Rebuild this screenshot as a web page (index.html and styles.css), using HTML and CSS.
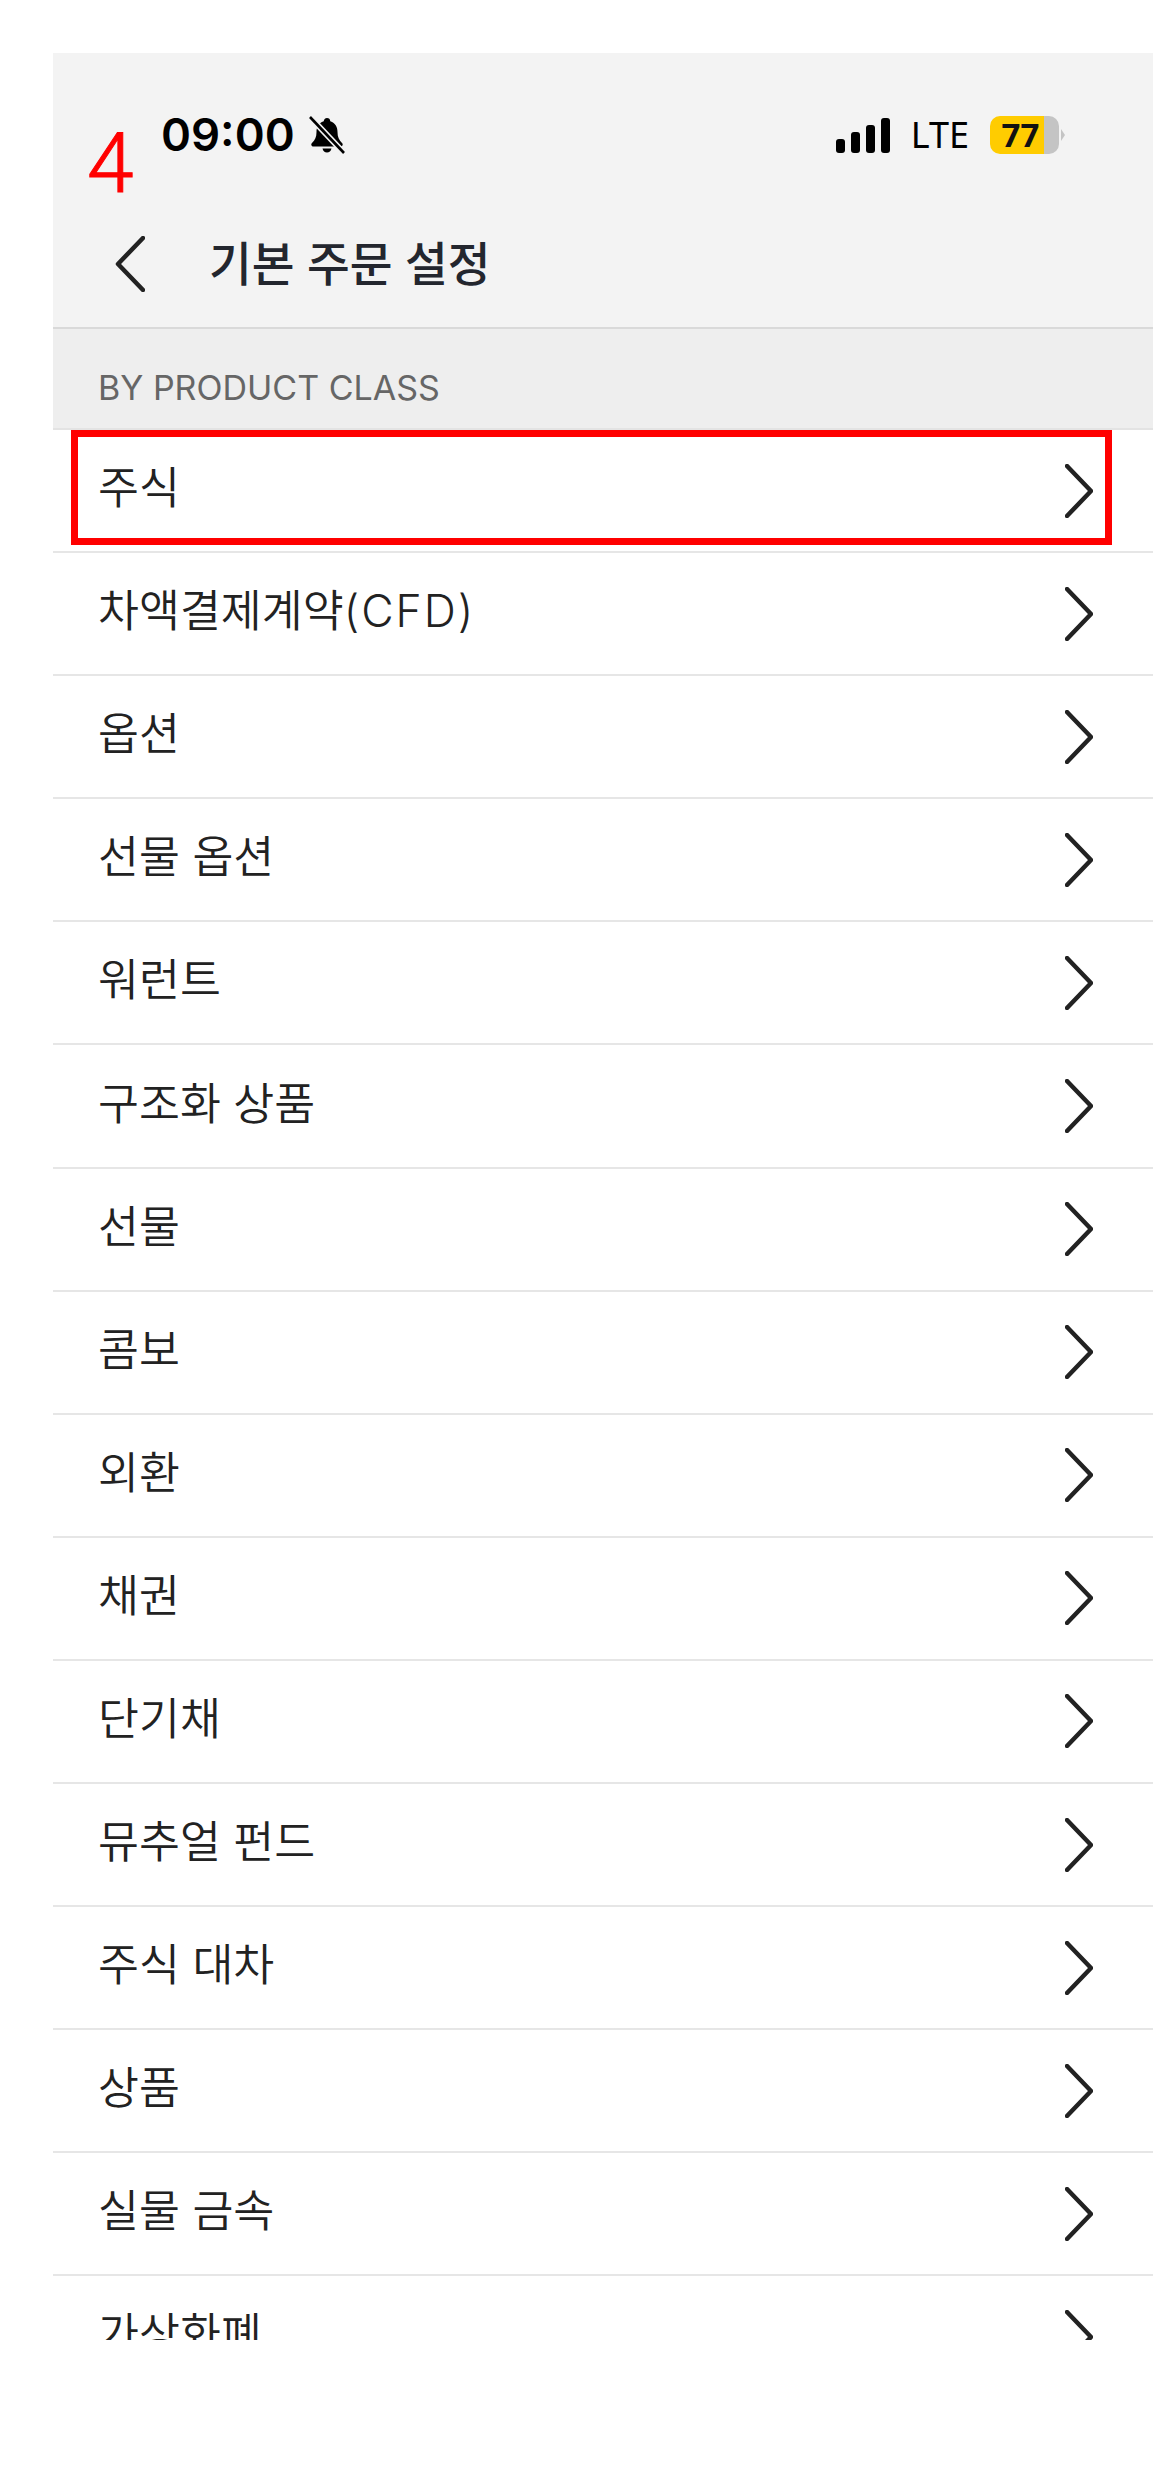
FILE: index.html
```html
<!DOCTYPE html>
<html lang="ko">

<head>
  <meta charset="UTF-8">
  <meta name="viewport" content="width=device-width, initial-scale=1.0">
  <title>기본 주문 설정</title>
  <link rel="stylesheet" href="styles.css">
</head>

<body>
  <main class="phone">
    <header class="top">
      <div class="status">
        <div class="status-left">
          <span class="time">09:00</span>
          <svg class="bell" viewBox="0 0 36 40">
            <path d="M18 3c-2 0-3 1.500-3.300 3.200C9.500 8 7.500 12 7.500 17c0 5-1.500 8-4.500 11-1.500 1.500-.5 3.500 1.500 3.500h27c2 0 3-2 1.500-3.500-3-3-4.500-6-4.500-11 0-5-2-9-7.200-10.800C21 4 20 3 18 3zM13.500 33.500c.5 2.500 2.300 4 4.500 4s4-1.500 4.500-4z" fill="#000" />
            <path d="M1 2l34 36" stroke="#f2f2f2" stroke-width="6" />
            <path d="M1 2l34 36" stroke="#000" stroke-width="2.600" />
          </svg>
        </div>
        <div class="status-right">
          <span class="signal"><i></i><i></i><i></i><i></i></span>
          <span class="lte">LTE</span>
          <span class="battery">77</span>
        </div>
      </div>
      <div class="nav">
        <svg class="back" viewBox="0 0 30 56">
          <path d="M28 2L3 28l25 26" />
        </svg>
        <h1>기본 주문 설정</h1>
      </div>
    </header>

    <div class="section-title">BY PRODUCT CLASS</div>

    <ul class="list">
      <li>주식<svg class="arrow" viewBox="0 0 28 54"><path d="M2 2l24 25L2 52" /></svg></li>
      <li><span>차액결제계약<span class="latin">(CFD)</span></span><svg class="arrow" viewBox="0 0 28 54"><path d="M2 2l24 25L2 52" /></svg></li>
      <li>옵션<svg class="arrow" viewBox="0 0 28 54"><path d="M2 2l24 25L2 52" /></svg></li>
      <li>선물 옵션<svg class="arrow" viewBox="0 0 28 54"><path d="M2 2l24 25L2 52" /></svg></li>
      <li>워런트<svg class="arrow" viewBox="0 0 28 54"><path d="M2 2l24 25L2 52" /></svg></li>
      <li>구조화 상품<svg class="arrow" viewBox="0 0 28 54"><path d="M2 2l24 25L2 52" /></svg></li>
      <li>선물<svg class="arrow" viewBox="0 0 28 54"><path d="M2 2l24 25L2 52" /></svg></li>
      <li>콤보<svg class="arrow" viewBox="0 0 28 54"><path d="M2 2l24 25L2 52" /></svg></li>
      <li>외환<svg class="arrow" viewBox="0 0 28 54"><path d="M2 2l24 25L2 52" /></svg></li>
      <li>채권<svg class="arrow" viewBox="0 0 28 54"><path d="M2 2l24 25L2 52" /></svg></li>
      <li>단기채<svg class="arrow" viewBox="0 0 28 54"><path d="M2 2l24 25L2 52" /></svg></li>
      <li>뮤추얼 펀드<svg class="arrow" viewBox="0 0 28 54"><path d="M2 2l24 25L2 52" /></svg></li>
      <li>주식 대차<svg class="arrow" viewBox="0 0 28 54"><path d="M2 2l24 25L2 52" /></svg></li>
      <li>상품<svg class="arrow" viewBox="0 0 28 54"><path d="M2 2l24 25L2 52" /></svg></li>
      <li>실물 금속<svg class="arrow" viewBox="0 0 28 54"><path d="M2 2l24 25L2 52" /></svg></li>
      <li>가상화폐<svg class="arrow" viewBox="0 0 28 54"><path d="M2 2l24 25L2 52" /></svg></li>
    </ul>

    <!-- annotations drawn over the screenshot -->
    <span class="step">4</span>
    <div class="highlight"></div>
  </main>
</body>

</html>
```

FILE: styles.css
```css
* {
  box-sizing: border-box;
  margin: 0;
  padding: 0;
}

html,
body {
  background: #fff;
}

body {
  height: 2489px;
  padding: 53px 0 149px 53px;
  font-family: Inter, "Noto Sans CJK KR", "Noto Sans", sans-serif;
  color: #222;
  overflow: hidden;
}

.phone {
  height: 2287px;
  position: relative;
  overflow: hidden;
  background: #fff;
}

.top {
  height: 276px;
  padding-top: 61px;
  background: #f3f3f3;
  border-bottom: 2px solid #d9d9d9;
}

.status {
  display: flex;
  justify-content: space-between;
  align-items: center;
  height: 42px;
  padding: 0 94px 0 108px;
}

.status-left,
.status-right {
  display: flex;
  align-items: center;
}

.time {
  font-size: 45.5px;
  font-weight: 600;
  line-height: 42px;
  color: #000;
}

.bell {
  width: 36px;
  height: 40px;
  margin-left: 14px;
}

.signal {
  display: flex;
  align-items: flex-end;
  gap: 6px;
  height: 35px;
}

.signal i {
  display: block;
  width: 9px;
  background: #000;
  border-radius: 3px;
}

.signal i:nth-child(1) {
  height: 14px;
}

.signal i:nth-child(2) {
  height: 21px;
}

.signal i:nth-child(3) {
  height: 28px;
}

.signal i:nth-child(4) {
  height: 35px;
}

.lte {
  margin-left: 21px;
  font-family: "Noto Sans", sans-serif;
  font-size: 36px;
  line-height: 42px;
  color: #000;
}

.battery {
  width: 69px;
  height: 38px;
  margin-left: 21px;
  padding-right: 8px;
  position: relative;
  border-radius: 10px;
  background: linear-gradient(to right, #ffcc00 54px, #c4c4c4 54px);
  font-family: "Noto Sans", sans-serif;
  font-size: 33px;
  font-weight: 700;
  line-height: 38px;
  text-align: center;
  color: #111;
}

.battery::after {
  content: "";
  position: absolute;
  left: 71px;
  top: 13px;
  border-left: 4px solid #c4c4c4;
  border-top: 6px solid transparent;
  border-bottom: 6px solid transparent;
}

.nav {
  display: flex;
  align-items: center;
  height: 60px;
  margin-top: 78px;
  padding-left: 62px;
}

.back {
  width: 30px;
  height: 56px;
  flex: none;
}

.back path,
.arrow path {
  fill: none;
  stroke: #222;
  stroke-width: 4.500;
  stroke-linecap: round;
  stroke-linejoin: round;
}

.nav h1 {
  margin-left: 64px;
  font-size: 46.5px;
  font-weight: 500;
  line-height: 60px;
  color: #23262e;
}

.section-title {
  display: flex;
  align-items: center;
  height: 101px;
  padding: 18px 0 0 45px;
  background: #eee;
  border-bottom: 2px solid #e3e3e3;
  font-size: 34px;
  color: #666;
}

.list {
  list-style: none;
}

.list li {
  display: flex;
  justify-content: space-between;
  align-items: center;
  height: 123.1px;
  padding: 0 60px 12px 45px;
  border-bottom: 2px solid #e6e6e6;
  font-size: 44.5px;
  font-weight: 350;
  color: #222;
}

.latin {
  font-weight: 300;
  letter-spacing: 2px;
}

.arrow {
  width: 28px;
  height: 54px;
  margin-top: 12px;
  flex: none;
}

.step {
  position: absolute;
  left: 34px;
  top: 65px;
  font-family: Roboto, sans-serif;
  font-size: 84px;
  font-weight: 300;
  line-height: 92px;
  color: #f00;
  -webkit-text-stroke: 1px #f00;
}

.highlight {
  position: absolute;
  left: 18px;
  top: 377px;
  width: 1041px;
  height: 115px;
  border: 7px solid #f00;
}
```
